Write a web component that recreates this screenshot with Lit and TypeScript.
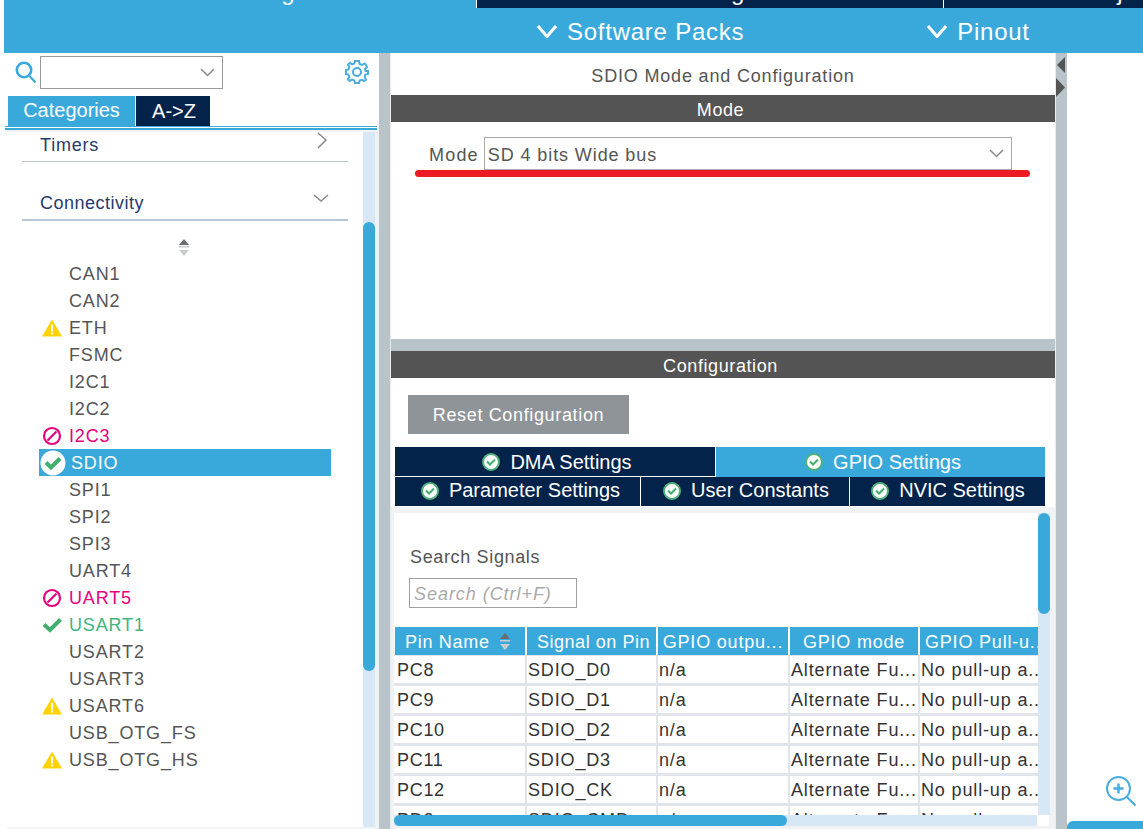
import { LitElement, html, css, svg } from "lit";
import { customElement } from "lit/decorators.js";

type St = "" | "warn" | "no" | "ok" | "sel";
const items: [string, St][] = [
  ["CAN1", ""], ["CAN2", ""], ["ETH", "warn"], ["FSMC", ""], ["I2C1", ""], ["I2C2", ""], ["I2C3", "no"],
  ["SDIO", "sel"], ["SPI1", ""], ["SPI2", ""], ["SPI3", ""], ["UART4", ""], ["UART5", "no"], ["USART1", "ok"],
  ["USART2", ""], ["USART3", ""], ["USART6", "warn"], ["USB_OTG_FS", ""], ["USB_OTG_HS", "warn"],
];
const rows = [
  ["PC8", "SDIO_D0"], ["PC9", "SDIO_D1"], ["PC10", "SDIO_D2"], ["PC11", "SDIO_D3"], ["PC12", "SDIO_CK"], ["PD2", "SDIO_CMD"],
];

const chev = (w: number, h: number, color: string, sw: number) => svg`<svg width=${w} height=${h} viewBox="0 0 ${w} ${h}"><path d="M1 1 L${w / 2} ${h - 1.5} L${w - 1} 1" fill="none" stroke=${color} stroke-width=${sw}/></svg>`;
const tick = html`<svg class="tick" width="18" height="18" viewBox="0 0 18 18"><circle cx="9" cy="9" r="8" fill="#fff" stroke="#4db37a" stroke-width="2"/><path d="M5 8.5 L8 11.5 L13 6.5" fill="none" stroke="#41b06e" stroke-width="2"/></svg>`;
const sortIcon = html`<svg width="12" height="18" viewBox="0 0 12 18"><path d="M6 0 L11 6 H1 Z" fill="#6b6d70"/><rect x="1" y="7" width="10" height="1.5" fill="#c8cccf"/><path d="M1 11 H11 L6 17 Z" fill="#c8cccf"/></svg>`;

function icon(s: St) {
  if (s === "warn") return html`<svg width="20" height="18" viewBox="0 0 20 18"><path d="M10 0.5 L20 17.5 H0 Z" fill="#ffd200"/><rect x="9" y="5.5" width="2" height="7" fill="#fff"/><rect x="9" y="13.5" width="2" height="2" fill="#fff"/></svg>`;
  if (s === "no") return html`<svg width="20" height="20" viewBox="0 0 20 20"><circle cx="10" cy="10" r="8" fill="none" stroke="#e6007e" stroke-width="2.2"/><path d="M5.5 14.5 L14.5 5.5" stroke="#e6007e" stroke-width="2.2"/></svg>`;
  if (s === "ok") return html`<svg width="20" height="16" viewBox="0 0 20 16"><path d="M2 7.5 L8 13 L18.5 2.5" fill="none" stroke="#41b06e" stroke-width="4"/></svg>`;
  if (s === "sel") return html`<svg width="26" height="26" viewBox="0 0 26 26"><circle cx="13" cy="13" r="12.5" fill="#fff"/><path d="M6 12.5 L11 17.5 L20 8.5" fill="none" stroke="#41b06e" stroke-width="4"/></svg>`;
  return "";
}

@customElement("app-root")
export class AppRoot extends LitElement {
  static styles = css`
    :host { display: block; width: 1143px; height: 829px; overflow: hidden; background: #fff; font-family: "Liberation Sans", Arial, sans-serif; color: #555; }
    .header { margin-left: 4px; height: 53px; background: #39a9dc; color: #fff; display: flex; flex-direction: column; }
    .maintabs { height: 8px; display: flex; overflow: hidden; }
    .mt { box-sizing: border-box; height: 8px; display: flex; justify-content: center; align-items: flex-end; font-size: 24px; white-space: nowrap; overflow: hidden; line-height: 8px; }
    .mt span { position: relative; top: -12px; }
    .mt1 { width: 472px; padding-left: 16px; }
    .mt2 { width: 467px; background: #03234b; border-left: 1px solid #fff; padding-left: 6px; }
    .mt3 { flex: 1; background: #03234b; border-left: 1px solid #fff; justify-content: flex-start; padding-left: 136px; }
    .subbar { height: 45px; display: flex; align-items: center; font-size: 24px; letter-spacing: 0.75px; padding-top: 2px; box-sizing: border-box; }
    .sp { display: flex; align-items: center; gap: 10px; }
    .sp1 { margin-left: 533px; }
    .sp2 { margin-left: 183px; }
    .sp svg { display: block; }

    .main { display: flex; height: 776px; }
    .left { margin-left: 4px; width: 375px; display: flex; flex-direction: column; background: #fff; flex: none; }
    .toolbar { height: 43px; display: flex; align-items: flex-start; }
    .toolbar svg { display: block; }
    .sicon { margin: 8px 3px 0 11px; }
    .combo { box-sizing: border-box; width: 183px; height: 33px; margin-top: 3px; border: 1px solid #999; display: flex; align-items: center; justify-content: flex-end; padding-right: 7px; background: #fff; }
    .gear { margin: 7px 0 0 122px; }
    .ltabs { height: 30px; display: flex; padding-left: 4px; font-size: 20px; }
    .ltab { display: flex; align-items: center; justify-content: center; color: #fff; box-sizing: border-box; }
    .ltab.a { width: 127px; background: #39a9dc; padding-bottom: 2px; }
    .ltab.b { width: 74px; background: #03234b; margin-left: 1px; padding-left: 2px; }
    .lrule { box-sizing: border-box; height: 4px; margin: 0 2px 0 1px; border-top: 1px solid #39a9dc; border-bottom: 2px solid #39a9dc; }
    .lbody { flex: 1; min-height: 0; display: flex; margin-left: 3px; background: #f0f2f4; padding: 2px 4px 2px 0; }
    .lscroll { flex: 1; min-width: 0; background: #fff; display: flex; flex-direction: column; }
    .cat { height: 29px; margin-left: 15px; width: 326px; border-bottom: 1px solid #b8c3ca; color: #263a6b; font-size: 18px; letter-spacing: 0.8px; display: flex; justify-content: space-between; flex: none; }
    .cat span { padding: 2px 0 0 18px; line-height: 23px; }
    .cat svg { display: block; margin: 0 20px 0 0; }
    .cat.open { margin-top: 27px; height: 30px; border-bottom: 2px solid #b8c8d8; letter-spacing: 0.5px; }
    .cat.open span { padding-top: 3px; }
    .cat.open svg { margin: 3px 19px 0 0; }
    .sortrow { height: 39px; display: flex; justify-content: center; align-items: flex-end; width: 354px; flex: none; }
    .sortrow svg { display: block; margin-bottom: 3px; }
    .list { margin-left: 32px; width: 292px; }
    .row { height: 27px; display: flex; align-items: center; font-size: 18px; letter-spacing: 0.85px; color: #555; line-height: 25px; }
    .row .nm { padding-top: 2px; }
    .ic { width: 30px; flex: none; display: flex; align-items: center; padding-left: 2.5px; box-sizing: border-box; }
    .ic svg { display: block; }
    .row.no { color: #e6007e; }
    .row.ok { color: #3fb57f; }
    .row.sel { background: #39a9dc; color: #fff; }
    .row.sel .ic { padding-left: 0; margin-left: 1px; width: 31px; }
    .track { width: 12px; flex: none; background: #d7e7f5; }
    .thumb { width: 12px; height: 449px; margin-top: 90px; border-radius: 6px; background: #39a9dc; }

    .div1 { width: 11px; background: #b8c3ca; flex: none; border-right: 1px solid #e8ecef; }
    .mid { width: 664px; display: flex; flex-direction: column; flex: none; background: #fff; }
    .title { height: 42px; display: flex; align-items: center; justify-content: center; font-size: 18px; letter-spacing: 0.82px; color: #555; padding: 5px 0 0 0; box-sizing: border-box; }
    .bar { height: 27px; box-sizing: border-box; background: #535453; color: #fff; font-size: 18px; letter-spacing: 0.6px; display: flex; align-items: center; justify-content: center; flex: none; padding: 3px 5px 0 0; }
    .modebody { height: 217px; position: relative; flex: none; }
    .moderow { display: flex; align-items: center; height: 33px; margin: 15px 0 0 38px; font-size: 18px; letter-spacing: 1.2px; }
    .ml { padding-top: 3px; }
    .modesel { box-sizing: border-box; margin-left: 5px; width: 528px; height: 33px; border: 1px solid #a8a8a8; display: flex; align-items: center; justify-content: space-between; padding: 0 7px 0 3px; letter-spacing: 0.9px; }
    .modesel span { padding-top: 3px; }
    .redline { position: absolute; left: 24px; top: 48px; width: 615px; height: 7px; background: #ed1c24; border-radius: 4px; }
    .hdiv { height: 12px; background: #b8c3ca; flex: none; }
    .cfg { flex: 1; min-height: 0; display: flex; flex-direction: column; }
    .reset { box-sizing: border-box; margin: 17px 0 0 17px; width: 221px; height: 39px; background: #8f9499; color: #fff; font-size: 18px; letter-spacing: 0.65px; display: flex; align-items: center; justify-content: center; flex: none; padding-top: 2px; }
    .tabs { margin: 13px 0 0 4px; width: 650px; flex: none; font-size: 20px; color: #fff; }
    .trow { display: flex; }
    .tab { display: flex; align-items: center; justify-content: center; gap: 10px; background: #03234b; box-sizing: border-box; padding-left: 4px; }
    .tab svg { display: block; flex: none; }
    .t1 { height: 29px; padding-top: 1px; }
    .t2 { height: 30px; border-top: 1px solid #fff; }
    .dma { width: 320px; }
    .gpio { flex: 1; height: 30px; background: #39a9dc; border-left: 1px solid #fff; margin-bottom: -1px; position: relative; padding-left: 5px; }
    .par { width: 245px; padding-left: 6px; padding-bottom: 2px; } .usr { width: 209px; border-left: 1px solid #fff; padding-left: 2px; padding-bottom: 2px; } .nv { flex: 1; border-left: 1px solid #fff; padding-left: 1px; padding-bottom: 2px; }
    .t2 .tab { height: 29px; }
    .pane { flex: 1; min-height: 0; background: #f0f2f4; padding: 6px 6px 3px 3px; display: flex; flex-direction: column; }
    .paneinner { flex: 1; min-height: 0; display: flex; }
    .content { width: 644px; background: #fff; display: flex; flex-direction: column; overflow: hidden; flex: none; }
    .sslabel { margin: 33px 0 0 16px; font-size: 18px; letter-spacing: 0.65px; line-height: 22px; color: #555; }
    .ssinput { box-sizing: border-box; margin: 10px 0 0 15px; width: 168px; height: 30px; border: 1px solid #a0a0a0; color: #aaa; font-style: italic; font-size: 18px; letter-spacing: 0.95px; display: flex; align-items: center; padding: 2px 0 0 4px; flex: none; }
    .table { margin-top: 19px; }
    .grid { display: grid; grid-template-columns: 131px 129px 130px 128px 118px; column-gap: 2px; }
    .thead { height: 28px; margin-left: 1px; grid-template-columns: 130px 129px 130px 128px 118px; }
    .th { box-sizing: border-box; background: #39a9dc; color: #fff; font-size: 18px; letter-spacing: 0.8px; display: flex; align-items: center; justify-content: center; white-space: nowrap; overflow: hidden; padding-top: 2px; }
    .th svg { display: block; margin-left: 9px; }
    .th.pn { justify-content: flex-start; padding-left: 10px; letter-spacing: 0.7px; }
    .th.sg { padding-left: 4px; letter-spacing: 0.55px; }
    .th.pu { justify-content: flex-start; padding-left: 5px; }
    .tr { height: 30px; box-sizing: border-box; padding-top: 1px; border-bottom: 2px solid #e1e5e9; background: #e1e5e9; }
    .td { height: 27px; background: #fff; font-size: 18px; letter-spacing: 0.85px; color: #333; padding-left: 1px; line-height: 29px; white-space: nowrap; overflow: hidden; }
    .td.first { padding-left: 3px; letter-spacing: 0.7px; }
    .vtrack { width: 12px; flex: none; background: #d7e7f5; }
    .vthumb { height: 101px; background: #39a9dc; border-radius: 6px; }
    .hbar { height: 11px; display: flex; flex: none; }
    .htrack { width: 644px; background: #d7e7f5; }
    .hthumb { width: 393px; height: 11px; border-radius: 6px; background: #39a9dc; }
    .corner { width: 12px; background: #fff; }

    .div2 { width: 11px; flex: none; background: #b8c3ca; border-left: 1px solid #e8ecef; display: flex; flex-direction: column; }
    .div2 svg { display: block; }
    .right { flex: 1; display: flex; flex-direction: column; background: #fff; }
    .zoom { margin: 723px 0 0 39px; display: block; flex: none; }
    .rbar { margin-top: 14px; height: 9px; border-radius: 6px 0 0 0; background: #39a9dc; flex: none; }
  `;

  render() {
    return html`
      <div class="header">
        <div class="maintabs">
          <div class="mt mt1"><span>Pinout &amp; Configuration</span></div>
          <div class="mt mt2"><span>Clock Configuration</span></div>
          <div class="mt mt3"><span>Project Manager</span></div>
        </div>
        <div class="subbar">
          <div class="sp sp1">${chev(20, 13, "#fff", 3)}<span>Software Packs</span></div>
          <div class="sp sp2">${chev(20, 13, "#fff", 3)}<span>Pinout</span></div>
        </div>
      </div>
      <div class="main">
        <div class="left">
          <div class="toolbar">
            <svg class="sicon" width="22" height="23" viewBox="0 0 22 23"><circle cx="9" cy="9" r="7.2" fill="none" stroke="#39a9dc" stroke-width="2.6"/><path d="M14.5 15 L20.5 21.5" stroke="#39a9dc" stroke-width="2"/></svg>
            <div class="combo">${chev(15, 9, "#888", 1.5)}</div>
            <svg class="gear" width="24" height="24" viewBox="0 0 24 24"><path d="M10 1 H14 L14.6 4 L17 5 L19.6 3.4 L20.6 4.4 L22 7 L20 9 L20.6 11 H23 V14 L20.4 14.6 L19.6 17 L21 19.6 L19 21 L17 19.8 L14.6 20.6 L14 23 H10 L9.4 20.6 L7 19.6 L4.6 21 L2.8 19 L4.4 17 L3.4 14.6 L1 14 V10 L3.4 9.4 L4.4 7 L3 4.6 L5 2.8 L7 4.4 L9.4 3.4 Z" fill="none" stroke="#48aee0" stroke-width="2"/><circle cx="12" cy="12" r="4" fill="none" stroke="#48aee0" stroke-width="2"/></svg>
          </div>
          <div class="ltabs"><div class="ltab a">Categories</div><div class="ltab b">A-&gt;Z</div></div>
          <div class="lrule"></div>
          <div class="lbody">
            <div class="lscroll">
              <div class="cat"><span>Timers</span><svg width="12" height="18" viewBox="0 0 12 18"><path d="M2 1 L10 8 L2 16" fill="none" stroke="#888" stroke-width="1.5"/></svg></div>
              <div class="cat open"><span>Connectivity</span><svg width="16" height="14" viewBox="0 0 16 14"><path d="M1 3 L8 9 L15 3" fill="none" stroke="#888" stroke-width="1.5"/></svg></div>
              <div class="sortrow">${sortIcon}</div>
              <div class="list">
                ${items.map(([n, s]) => html`<div class="row ${s}"><span class="ic">${icon(s)}</span><span class="nm">${n}</span></div>`)}
              </div>
            </div>
            <div class="track"><div class="thumb"></div></div>
          </div>
        </div>
        <div class="div1"></div>
        <div class="mid">
          <div class="title">SDIO Mode and Configuration</div>
          <div class="bar">Mode</div>
          <div class="modebody">
            <div class="moderow"><span class="ml">Mode</span><div class="modesel"><span>SD 4 bits Wide bus</span>${chev(15, 9, "#888", 1.5)}</div></div>
            <div class="redline"></div>
          </div>
          <div class="hdiv"></div>
          <div class="bar">Configuration</div>
          <div class="cfg">
            <div class="reset">Reset Configuration</div>
            <div class="tabs">
              <div class="trow">
                <div class="tab t1 dma">${tick}<span>DMA Settings</span></div>
                <div class="tab gpio">${tick}<span>GPIO Settings</span></div>
              </div>
              <div class="trow t2">
                <div class="tab par">${tick}<span>Parameter Settings</span></div>
                <div class="tab usr">${tick}<span>User Constants</span></div>
                <div class="tab nv">${tick}<span>NVIC Settings</span></div>
              </div>
            </div>
            <div class="pane">
              <div class="paneinner">
                <div class="content">
                  <div class="sslabel">Search Signals</div>
                  <div class="ssinput">Search (Ctrl+F)</div>
                  <div class="table">
                    <div class="grid thead">
                      <div class="th pn"><span>Pin Name</span>${sortIcon}</div>
                      <div class="th sg">Signal on Pin</div>
                      <div class="th">GPIO outpu...</div>
                      <div class="th">GPIO mode</div>
                      <div class="th pu">GPIO Pull-u..</div>
                    </div>
                    ${rows.map(([a, b]) => html`<div class="grid tr">
                      <div class="td first">${a}</div><div class="td">${b}</div><div class="td">n/a</div><div class="td">Alternate Fu...</div><div class="td">No pull-up a...</div>
                    </div>`)}
                  </div>
                </div>
                <div class="vtrack"><div class="vthumb"></div></div>
              </div>
              <div class="hbar"><div class="htrack"><div class="hthumb"></div></div><div class="corner"></div></div>
            </div>
          </div>
        </div>
        <div class="div2">
          <svg width="10" height="46" viewBox="0 0 10 46"><path d="M1 12 L9 4 V20 Z" fill="#535453"/><path d="M0 25 L9 34.5 L0 44 Z" fill="#535453"/></svg>
        </div>
        <div class="right">
          <svg class="zoom" width="31" height="31" viewBox="0 0 31 31"><circle cx="12.5" cy="12.5" r="11.5" fill="none" stroke="#48aee0" stroke-width="2"/><path d="M7.5 12.5 H17.5 M12.5 7.5 V17.5" stroke="#48aee0" stroke-width="2.5"/><path d="M21 21 L29.5 29.5" stroke="#48aee0" stroke-width="2.2"/></svg>
          <div class="rbar"></div>
        </div>
      </div>
    `;
  }
}
